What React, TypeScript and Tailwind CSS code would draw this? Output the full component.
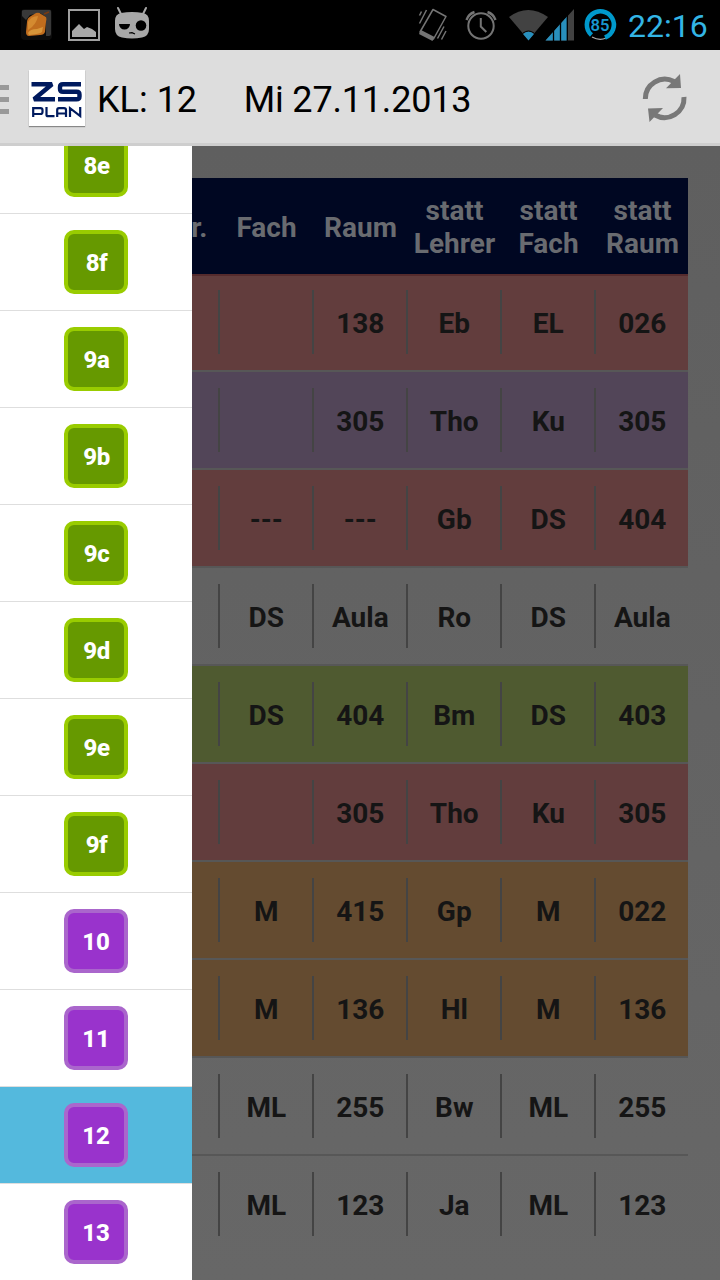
import React from "react";

type Row = { bg: string; cells: string[] };

const rows: Row[] = [
  { bg: "bg-[#623d3d]", cells: ["", "138", "Eb", "EL", "026"] },
  { bg: "bg-[#524558]", cells: ["", "305", "Tho", "Ku", "305"] },
  { bg: "bg-[#623d3d]", cells: ["---", "---", "Gb", "DS", "404"] },
  { bg: "bg-transparent", cells: ["DS", "Aula", "Ro", "DS", "Aula"] },
  { bg: "bg-[#4f5a30]", cells: ["DS", "404", "Bm", "DS", "403"] },
  { bg: "bg-[#623d3d]", cells: ["", "305", "Tho", "Ku", "305"] },
  { bg: "bg-[#644b30]", cells: ["M", "415", "Gp", "M", "022"] },
  { bg: "bg-[#644b30]", cells: ["M", "136", "Hl", "M", "136"] },
  { bg: "bg-transparent", cells: ["ML", "255", "Bw", "ML", "255"] },
  { bg: "bg-transparent", cells: ["ML", "123", "Ja", "ML", "123"] },
];

const headers = ["Fach", "Raum", "statt Lehrer", "statt Fach", "statt Raum"];
const classes = ["8e", "8f", "9a", "9b", "9c", "9d", "9e", "9f", "10", "11", "12", "13"];

function StatusBar() {
  return (
    <div className="flex h-[50px] shrink-0 items-center bg-black">
      <svg className="h-[50px] w-[160px]" viewBox="0 0 160 50">
        <rect x="21" y="9" width="31" height="31" rx="4" fill="#0c0c0c" />
        <path d="M22 11Q22 10 24 10H50Q51 10 51 12V34Q51 36 49 36H46V17L40 13L30 15L26 20L22 16Z" fill="#383838" />
        <path d="M27 22Q27 18 31 16L36 13Q39 12 41 14L46 17Q47 19 46 22L45 32Q44 35 40 35L29 36Q26 36 26 32Z" fill="#c06d1e" />
        <path d="M28 22Q31 16 38 16Q37 22 32 27L28 30Z" fill="#d48a30" />
        <path d="M28 33Q30 29 37 29L43 27L42 32Q40 34 29 35Z" fill="#d8963a" />
        <path d="M44 14l5-2" stroke="#7a3a10" strokeWidth="1.500" />
        <rect x="69" y="10" width="30" height="30" fill="none" stroke="#a0a0a0" strokeWidth="2" />
        <path d="M72 37V31l7-7 5 5 3-2 5 2 4 3v5z" fill="#a8a8a8" />
        <path d="M118 8l3 6M146 8l-3 6" stroke="#a8a8a8" strokeWidth="2" strokeLinecap="round" />
        <path d="M121 13Q132 11 143 13Q149 14 149 21V29Q149 36 142 37.500Q132 39.500 122 37.500Q115 36 115 29V21Q115 14 121 13Z" fill="#a8a8a8" />
        <path d="M119 24h11a5.500 5.500 0 0 1-11 0z" fill="#000" />
        <circle cx="141" cy="25.500" r="5.300" fill="#000" />
        <path d="M129 33l3-.3 3 1.300" stroke="#000" strokeWidth="1.200" fill="none" />
      </svg>
      <svg className="ml-auto h-[50px] w-[210px]" viewBox="410 0 210 50">
        <g fill="none" stroke="#747474" strokeWidth="1.500" strokeLinejoin="round">
          <path d="M433 9.500L446 16.500L433.500 39L420 32Z" />
          <path d="M420 32L433.500 39" strokeWidth="4.500" />
          <path d="M419.500 15.500l2-4M419.500 23.500L426.500 10M444 26.500L437.500 38.500M446 31L441.500 39.500" />
        </g>
        <g fill="none" stroke="#747474" strokeWidth="2">
          <circle cx="481" cy="26" r="12.700" />
          <path d="M480.800 18v8.500l5.500 5.500" />
          <path d="M466.500 20q2-6 8-8M495.500 20q-2-6-8-8" strokeWidth="2.400" />
        </g>
        <path d="M509 17Q528 3 548 17L528.500 40Z" fill="#424242" />
        <path d="M523 34Q528.500 29 534 34L528.500 40.500Z" fill="#288fbd" />
        <path d="M523 33Q528.500 29 534 33" fill="none" stroke="#000" strokeWidth="1" />
        <path d="M545.500 40.500L574 9v31.500z" fill="#424242" />
        <path d="M545.500 40.500L567 16.500v24z" fill="#288fbd" />
        <path d="M553.500 30v11M560.500 22v19M567.300 15v26" stroke="#000" strokeWidth="1.300" />
        <path d="M592 37Q599.500 41 606 38" fill="none" stroke="#aaa" strokeWidth="1.300" />
        <path d="M591.500 35A13.500 13.500 0 1 1 605 37.500" fill="none" stroke="#0099cc" strokeWidth="4.600" />
        <text x="600" y="31" textAnchor="middle" fontSize="17" fontWeight="600" fontFamily="Roboto" textLength="19" lengthAdjust="spacingAndGlyphs" fill="#1898d0">85</text>
      </svg>
      <span className="w-[100px] pt-[2px] pl-2 text-[32px] leading-[48px] text-[#33b5e5]">22:16</span>
    </div>
  );
}

function ActionBar() {
  return (
    <div className="flex h-24 shrink-0 items-center border-b-[3px] border-[#cecece] bg-[#ddd] pt-[3px]">
      <div className="flex w-[29px] flex-col gap-[7px] pt-[3px]">
        <i className="h-[5px] w-[9px] bg-[#999]" />
        <i className="h-[5px] w-[9px] bg-[#999]" />
        <i className="h-[5px] w-[9px] bg-[#999]" />
      </div>
      <div className="h-14 w-14 bg-white shadow-[0_1px_1px_#888]">
        <svg className="h-14 w-14" viewBox="0 0 56 56" fill="none" stroke="#001a5e">
          <path d="M2.500 14.200H23L5 29.300H26" strokeWidth="4.400" strokeLinejoin="bevel" />
          <path d="M52 14.200H34Q31 14.200 31 17V19Q31 21.800 34 21.800H47.500Q50.500 21.800 50.500 24.500V26.500Q50.500 29.300 47.500 29.300H29" strokeWidth="4.400" />
          <path d="M4.200 47V38.200H11.500Q13.500 38.200 13.500 40V42Q13.500 44 11.500 44H4.500M17.500 37V45Q17.500 46.200 19 46.200H25.500M28.200 47V40Q28.200 38.200 30 38.200H35Q37 38.200 37 40V47M28.200 43.500H37M41 47V38.200L51.200 46V37" strokeWidth="2.200" />
        </svg>
      </div>
      <h1 className="ml-3 pt-1 text-[36px] leading-[48px] whitespace-pre text-black"><span className="mr-[2px]">KL: 12     </span><span className="tracking-[-0.18px]">Mi 27.11.2013</span></h1>
      <svg className="mr-[28px] ml-auto h-[56px] w-[56px]" viewBox="636 70 56 56">
        <g fill="none" stroke="#787878" strokeWidth="5">
          <path d="M645.300 99A19.500 19.500 0 0 1 674 81.500" />
          <path d="M684 97A19.500 19.500 0 0 1 655 115" />
        </g>
        <path d="M680 74L681 88L666 88.300ZM648 108.500L663 108L649.500 122Z" fill="#787878" />
      </svg>
    </div>
  );
}

function Drawer() {
  return (
    <nav className="flex w-48 shrink-0 flex-col overflow-hidden bg-white">
      <div className="-mt-[29px] flex flex-col">
        {classes.map((name) => (
          <div
            key={name}
            className={`flex h-[97px] shrink-0 items-center justify-center border-b border-[#dedede] ${name === "12" ? "bg-[#54b9dd]" : "bg-white"}`}
          >
            <span
              className={`flex h-16 w-16 items-center justify-center rounded-[10px] border-4 pt-[2px] text-2xl font-extrabold text-white ${name.startsWith("1") ? "border-[#aa66cc] bg-[#9933cc]" : "border-[#99cc00] bg-[#669900] pl-px tracking-[-0.4px]"}`}
            >
              {name}
            </span>
          </div>
        ))}
      </div>
    </nav>
  );
}

function Plan() {
  return (
    <main className="w-[528px] shrink-0 bg-linear-to-b from-[#5f5f5f] to-[#676767] pt-8 pr-8">
      <div className="flex h-24 items-center bg-[#000722] pt-[2px] text-center text-[28px] leading-[33px] font-bold text-[#696b70]">
        <div className="flex w-[27.5px] shrink-0 justify-end pr-[12px]">Nr.</div>
        {headers.map((h) => (
          <div key={h} className="flex w-[94px] shrink-0 flex-col items-center">
            {h.split(" ").map((word) => (
              <span key={word}>{word}</span>
            ))}
          </div>
        ))}
      </div>
      {rows.map((row, i) => (
        <div key={i}>
          <div className={`flex h-24 items-center pl-[26px] ${row.bg} ${i === 0 ? "shadow-[inset_0_2px_0_#552b2d]" : ""}`}>
            {row.cells.map((cell, j) => (
              <div key={j} className="flex h-16 w-[94px] shrink-0 items-center justify-center border-l-2 border-[#444] pt-1 pl-[0.5px] text-[28px] font-bold text-[#151515]">
                {cell}
              </div>
            ))}
          </div>
          {i < rows.length - 1 && <div className="h-[2px] bg-[#575757]" />}
        </div>
      ))}
    </main>
  );
}

export default function App() {
  return (
    <div className="flex h-[1280px] w-[720px] flex-col overflow-hidden font-['Roboto',sans-serif]">
      <StatusBar />
      <ActionBar />
      <div className="flex min-h-0 flex-1">
        <div className="z-10 flex">
          <Drawer />
        </div>
        <Plan />
      </div>
    </div>
  );
}
